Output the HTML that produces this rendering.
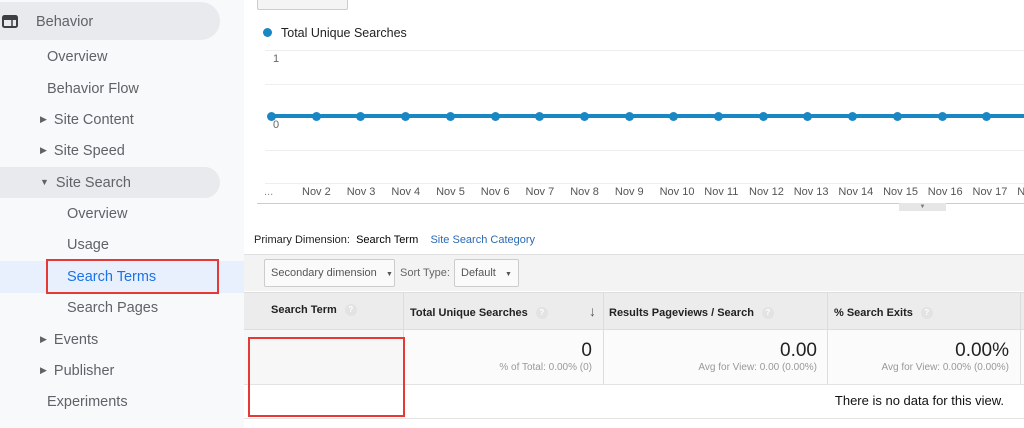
<!DOCTYPE html>
<html><head><meta charset="utf-8"><style>
*{margin:0;padding:0;box-sizing:border-box}
body{width:1024px;height:428px;overflow:hidden;background:#fff;font-family:"Liberation Sans",Arial,sans-serif;position:relative}
.sb{position:absolute;left:0;top:0;width:244px;height:428px;background:#f8f9fa}
.it{position:absolute;font-size:14.5px;color:#5f6368;white-space:nowrap;margin-top:2px}
.pill{position:absolute;background:#e8eaed;border-radius:0 20px 20px 0}
.tri{font-size:9px;margin-right:7px;position:relative;top:-2px}
.a{position:absolute;font-size:11px;color:#444;white-space:nowrap}
.g{position:absolute;left:265px;right:0;height:1px;background:#eee}
.dot{position:absolute;width:9px;height:9px;border-radius:50%;background:#1a87c5;top:112px}
.vl{position:absolute;width:1px;background:#ddd}
.hq{display:inline-block;width:12px;height:12px;border-radius:50%;background:#e3e3e3;color:#fff;font-size:8px;text-align:center;line-height:12px;margin-left:8px;vertical-align:middle}
</style></head><body>
<div class="sb">
<div class="pill" style="left:0;top:2px;width:220px;height:38px"></div>
<div class="pill" style="left:0;top:167px;width:220px;height:31px"></div>
<div style="position:absolute;left:0;top:261px;width:244px;height:32px;background:#e8f0fe"></div>
<svg style="position:absolute;left:2px;top:15px" width="16" height="13"><rect x="1" y="1" width="14" height="11" rx="1.5" fill="none" stroke="#3c4043" stroke-width="2"/><rect x="1" y="1" width="14" height="4" fill="#3c4043"/><line x1="10" y1="5" x2="10" y2="12" stroke="#3c4043" stroke-width="1.5"/></svg>
<div class="it" style="left:36px;top:12px">Behavior</div>
<div class="it" style="left:47px;top:47px">Overview</div>
<div class="it" style="left:47px;top:79px">Behavior Flow</div>
<div class="it" style="left:40px;top:110px"><span class="tri">▶</span>Site Content</div>
<div class="it" style="left:40px;top:141px"><span class="tri">▶</span>Site Speed</div>
<div class="it" style="left:40px;top:173px"><span class="tri">▼</span>Site Search</div>
<div class="it" style="left:67px;top:204px">Overview</div>
<div class="it" style="left:67px;top:235px">Usage</div>
<div class="it" style="left:67px;top:267px;color:#1a73e8">Search Terms</div>
<div class="it" style="left:67px;top:298px">Search Pages</div>
<div class="it" style="left:40px;top:330px"><span class="tri">▶</span>Events</div>
<div class="it" style="left:40px;top:361px"><span class="tri">▶</span>Publisher</div>
<div class="it" style="left:47px;top:392px">Experiments</div>
<div style="position:absolute;left:46px;top:259px;width:173px;height:35px;border:2px solid #e53935"></div>
</div>
<div style="position:absolute;left:257px;top:-5px;width:91px;height:15px;border:1px solid #ccc;border-radius:2px;background:#f4f4f4"></div>
<div style="position:absolute;left:263px;top:28px;width:9px;height:9px;border-radius:50%;background:#1a87c5"></div>
<div class="a" style="left:281px;top:26px;font-size:12.5px;color:#222">Total Unique Searches</div>
<div class="g" style="top:50px"></div><div class="g" style="top:84px"></div><div class="g" style="top:150px"></div><div class="g" style="top:183px"></div>
<div style="position:absolute;left:257px;right:0;top:203px;height:1px;background:#ccc"></div>
<div class="a" style="left:273px;top:53px;color:#666">1</div>
<div class="a" style="left:273px;top:119px;color:#666">0</div>
<div style="position:absolute;left:268px;right:0;top:114px;height:4px;background:#1a87c5"></div>
<div id="dots"></div>
<div class="a" style="left:264px;top:186px;color:#888">...</div>
<div id="lbl"></div>
<div style="position:absolute;left:899px;top:203px;width:47px;height:8px;background:#e6e6e6;font-size:6px;color:#777;text-align:center;line-height:8px">▼</div>
<div class="a" style="left:254px;top:234px;color:#222">Primary Dimension:&nbsp; <b style="font-weight:normal;color:#000">Search Term</b>&nbsp;&nbsp;&nbsp; <span style="color:#2a6bb5">Site Search Category</span></div>
<div style="position:absolute;left:244px;top:254px;width:780px;height:37px;background:#f3f3f3;border-top:1px solid #e0e0e0"></div>
<div style="position:absolute;left:264px;top:259px;width:131px;height:28px;border:1px solid #ccc;border-radius:2px;background:#fafafa"></div>
<div class="a" style="left:271px;top:267px;color:#555">Secondary dimension&nbsp;&nbsp; <span style="font-size:7px">▼</span></div>
<div class="a" style="left:400px;top:267px;color:#666">Sort Type:</div>
<div style="position:absolute;left:454px;top:259px;width:65px;height:28px;border:1px solid #ccc;border-radius:2px;background:#fafafa"></div>
<div class="a" style="left:461px;top:267px;color:#555">Default&nbsp;&nbsp; <span style="font-size:7px">▼</span></div>
<div style="position:absolute;left:244px;top:292px;width:780px;height:38px;background:#ececec;border-top:1px solid #ddd;border-bottom:1px solid #ddd"></div>
<div style="position:absolute;left:244px;top:330px;width:159px;height:54px;background:#f7f7f7"></div>
<div style="position:absolute;left:403px;top:330px;width:621px;height:54px;background:#fbfbfb"></div>
<div style="position:absolute;left:244px;top:384px;width:780px;height:1px;background:#e3e3e3"></div>
<div style="position:absolute;left:244px;top:418px;width:780px;height:1px;background:#e3e3e3"></div>
<div class="vl" style="left:403px;top:292px;height:92px"></div>
<div class="vl" style="left:603px;top:292px;height:92px"></div>
<div class="vl" style="left:827px;top:292px;height:92px"></div>
<div class="vl" style="left:1020px;top:292px;height:92px"></div>
<div class="a" style="left:271px;top:304px;font-weight:bold;color:#222">Search Term<span class="hq">?</span></div>
<div class="a" style="left:410px;top:307px;font-weight:bold;color:#222">Total Unique Searches<span class="hq">?</span></div>
<div class="a" style="left:589px;top:303px;font-size:14px;color:#555">↓</div>
<div class="a" style="left:609px;top:307px;font-weight:bold;color:#222">Results Pageviews / Search<span class="hq">?</span></div>
<div class="a" style="left:834px;top:307px;font-weight:bold;color:#222">% Search Exits<span class="hq">?</span></div>
<div class="a" style="right:432px;top:340px;font-size:19px;color:#222">0</div>
<div class="a" style="right:432px;top:362px;font-size:10px;color:#999">% of Total: 0.00% (0)</div>
<div class="a" style="right:207px;top:340px;font-size:19px;color:#222">0.00</div>
<div class="a" style="right:207px;top:362px;font-size:10px;color:#999">Avg for View: 0.00 (0.00%)</div>
<div class="a" style="right:15px;top:340px;font-size:19px;color:#222">0.00%</div>
<div class="a" style="right:15px;top:362px;font-size:10px;color:#999">Avg for View: 0.00% (0.00%)</div>
<div class="a" style="right:20px;top:393px;font-size:13px;color:#111">There is no data for this view.</div>
<div style="position:absolute;left:248px;top:337px;width:157px;height:80px;border:2px solid #e53935"></div>
<script>
var d='',l='';
for(var i=0;i<17;i++){d+='<div class="dot" style="left:'+(267+44.7*i)+'px"></div>';}
var n=['Nov 2','Nov 3','Nov 4','Nov 5','Nov 6','Nov 7','Nov 8','Nov 9','Nov 10','Nov 11','Nov 12','Nov 13','Nov 14','Nov 15','Nov 16','Nov 17','Nov 18'];
for(var i=0;i<17;i++){l+='<div class="a" style="left:'+(316+44.7*i-14)+'px;top:186px;color:#555">'+n[i]+'</div>';}
document.getElementById('dots').innerHTML=d;document.getElementById('lbl').innerHTML=l;
</script>
</body></html>
